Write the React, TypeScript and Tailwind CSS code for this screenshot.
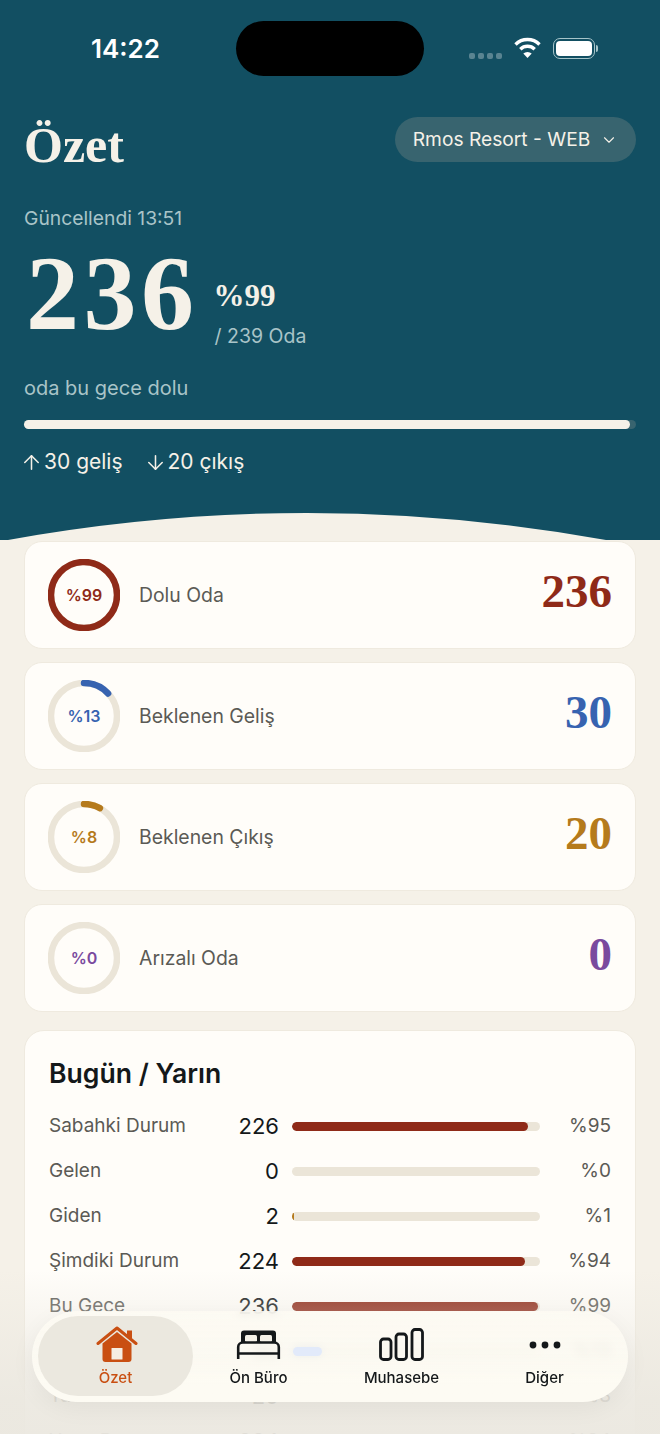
import React from 'react';
import { ChevronDown, ArrowUp, ArrowDown } from 'lucide-react';

const serif = { fontFamily: '"Liberation Serif", serif' };

const metrics = [
  { label: 'Dolu Oda', value: 236, pct: 99, color: '#8f2a18', text: 'text-[#8f2a18]' },
  { label: 'Beklenen Geliş', value: 30, pct: 13, color: '#3763b0', text: 'text-[#3763b0]' },
  { label: 'Beklenen Çıkış', value: 20, pct: 8, color: '#b57a1c', text: 'text-[#b57a1c]' },
  { label: 'Arızalı Oda', value: 0, pct: 0, color: '#7a4a9e', text: 'text-[#7a4a9e]' },
];

const rows = [
  { label: 'Sabahki Durum', value: 226, pct: 95, width: 95, color: '#8f2a18' },
  { label: 'Gelen', value: 0, pct: 0, width: 0, color: '#3763b0' },
  { label: 'Giden', value: 2, pct: 1, width: 1, color: '#b57a1c' },
  { label: 'Şimdiki Durum', value: 224, pct: 94, width: 94, color: '#8f2a18' },
  { label: 'Bu Gece', value: 236, pct: 99, width: 99, color: '#8f2a18' },
  { label: 'Yarın Gelen', value: 30, pct: 13, width: 12, color: '#3763b0' },
  { label: 'Yarın Giden', value: 20, pct: 8, width: 8, color: '#b57a1c' },
  { label: 'Yarın Durum', value: 224, pct: 94, width: 94, color: '#8f2a18' },
];

function Ring({ pct, color, text }: { pct: number; color: string; text: string }) {
  const r = 33;
  const c = 2 * Math.PI * r;
  return (
    <div className="relative flex h-[72px] w-[72px] shrink-0 items-center justify-center">
      <svg className="absolute inset-0" width="72" height="72" viewBox="0 0 72 72">
        <circle cx="36" cy="36" r={r} fill="none" stroke="#ebe5d8" strokeWidth="6.5" />
        {pct > 0 && (
          <circle
            cx="36"
            cy="36"
            r={r}
            fill="none"
            stroke={color}
            strokeWidth="6.5"
            strokeLinecap="round"
            strokeDasharray={`${(c * pct) / 100} ${c}`}
            transform="rotate(-90 36 36)"
          />
        )}
      </svg>
      <span className={`text-[16px] font-semibold ${text}`}>%{pct}</span>
    </div>
  );
}

function HomeIcon() {
  return (
    <svg className="ml-[2px]" width="42" height="37" viewBox="0 0 42 37">
      <path d="M6.5 17.5 21 6l14.5 11.5V33a3 3 0 0 1-3 3h-23a3 3 0 0 1-3-3z" fill="#c94f12" />
      <rect x="15.5" y="22" width="11" height="11.5" rx="0.5" fill="#f6eee2" />
      <path d="M2 17.5 21 2l19 15.5" fill="none" stroke="#c94f12" strokeWidth="3" strokeLinecap="round" strokeLinejoin="round" />
      <path d="M31 4.5h5v10l-5-4z" fill="#c94f12" />
    </svg>
  );
}

function BedIcon() {
  return (
    <svg width="45" height="29" viewBox="0 0 45 29">
      <path d="M5 13V3.5A3 3 0 0 1 8 .5h29a3 3 0 0 1 3 3V13z" fill="#14181a" />
      <rect x="9" y="5" width="12" height="7" rx="1.5" fill="#f4f1e8" />
      <rect x="24" y="5" width="12" height="7" rx="1.5" fill="#f4f1e8" />
      <path
        d="M2.2 29V17a4.5 4.5 0 0 1 4.5-4.5h31.6a4.5 4.5 0 0 1 4.5 4.5v12"
        fill="none"
        stroke="#14181a"
        strokeWidth="2.6"
      />
      <path d="M2 23.5h41" fill="none" stroke="#14181a" strokeWidth="2.6" />
    </svg>
  );
}

function BarsIcon() {
  return (
    <svg width="45" height="33" viewBox="0 0 45 33" fill="none" stroke="#14181a" strokeWidth="2.8">
      <rect x="1.5" y="11" width="10.5" height="20.5" rx="3" />
      <rect x="17" y="6" width="10.5" height="25.5" rx="3" />
      <rect x="33" y="1.5" width="10.5" height="30" rx="3" />
    </svg>
  );
}

function DotsIcon() {
  return (
    <svg width="32" height="8" viewBox="0 0 32 8" fill="#14181a">
      <circle cx="4" cy="4" r="3.4" />
      <circle cx="16" cy="4" r="3.4" />
      <circle cx="28" cy="4" r="3.4" />
    </svg>
  );
}

function StatusIcons() {
  return (
    <div className="flex items-center">
      <div className="mr-[11px] mt-[14px] flex gap-[3px]">
        <span className="h-[6px] w-[6px] rounded-[2px] bg-white/30" />
        <span className="h-[6px] w-[6px] rounded-[2px] bg-white/30" />
        <span className="h-[6px] w-[6px] rounded-[2px] bg-white/30" />
        <span className="h-[6px] w-[6px] rounded-[2px] bg-white/30" />
      </div>
      <svg className="-mt-[3px]" width="29" height="21" viewBox="0 0 28 21" fill="none" stroke="white" strokeWidth="3.4">
        <path d="M2 7.5a17 17 0 0 1 24 0" />
        <path d="M6.8 12.2a10.2 10.2 0 0 1 14.4 0" />
        <path d="M14 21l-4.2-4.4a6 6 0 0 1 8.4 0z" fill="white" stroke="none" />
      </svg>
      <div className="-mt-[1px] ml-[11px] flex items-center">
        <div className="flex h-[21px] w-[42px] items-center justify-center rounded-[7px] border-[1.5px] border-[#a6c4c9]">
          <div className="h-[15px] w-[36px] rounded-[4px] bg-white" />
        </div>
        <div className="ml-[1px] h-[7px] w-[2px] rounded-r-full bg-[#a6c4c9]" />
      </div>
    </div>
  );
}

function NavItem({ label, icon, active }: { label: string; icon: React.ReactNode; active?: boolean }) {
  return (
    <div className="flex w-[143px] flex-col items-center">
      <div className="flex h-[44px] items-center justify-center">{icon}</div>
      <span className={`mt-[1px] text-[15px] font-medium leading-[20px] ${active ? 'text-[#c94f12]' : 'text-[#14181a]'}`}>{label}</span>
    </div>
  );
}

export default function App() {
  return (
    <div className="relative h-[1434px] w-[660px] overflow-hidden bg-[#f5f1e8]" style={{ fontFamily: 'Inter, sans-serif' }}>
      {/* Header */}
      <header className="h-[540px] bg-[#124f62] px-[24px] pt-[21px]">
        <div className="flex h-[55px] items-center">
          <span className="ml-[67px] w-[145px] text-[26px] font-semibold text-white">14:22</span>
          <div className="h-[55px] w-[188px] rounded-[28px] bg-black" />
          <div className="ml-[45px]">
            <StatusIcons />
          </div>
        </div>

        <div className="mt-[41px] flex items-start justify-between">
          <h1 className="text-[50px] font-bold leading-[56px] text-[#f5f1e8]" style={serif}>Özet</h1>
          <div className="flex h-[45px] w-[241px] items-center justify-center gap-[10px] rounded-full bg-[#38646f] text-[19.2px] text-[#f5f1e8]">
            Rmos Resort - WEB
            <ChevronDown size={18} strokeWidth={1.5} />
          </div>
        </div>

        <p className="mt-[33px] text-[19.3px] leading-[24px] text-[#a9c4c8]">Güncellendi 13:51</p>

        <div className="mt-[14px] flex items-start">
          <span className="ml-[2px] text-[106px] font-bold leading-[100px] tracking-[4.5px] text-[#f5f1e8]" style={serif}>236</span>
          <div className="ml-[15px] mt-[34px]">
            <div className="text-[31px] font-bold leading-[36px] text-[#f5f1e8]" style={serif}>%99</div>
            <div className="ml-[1px] mt-[9px] text-[19.5px] leading-[26px] text-[#a9c4c8]">/ 239 Oda</div>
          </div>
        </div>

        <p className="mt-[26px] text-[20px] leading-[26px] text-[#a9c4c8]">oda bu gece dolu</p>

        <div className="mt-[19px] h-[9px] rounded-full bg-[#38646f]">
          <div className="h-full w-[99%] rounded-full bg-[#f5f1e8]" />
        </div>

        <div className="mt-[20px] flex gap-[21px] text-[21px] leading-[26px] text-[#f5f1e8]">
          <span className="-ml-[4px] flex items-center gap-[1px]"><ArrowUp size={23} strokeWidth={1.6} />30 geliş</span>
          <span className="flex items-center gap-[1px]"><ArrowDown size={23} strokeWidth={1.6} />20 çıkış</span>
        </div>
      </header>

      {/* Curve over the header's bottom edge */}
      <svg className="absolute left-0 top-[513px]" width="660" height="27" viewBox="0 0 660 27">
        <path d="M8 27Q307 -27 606 27Z" fill="#f5f1e8" />
      </svg>

      {/* Metric cards */}
      <div className="flex flex-col gap-[13px] px-[24px] pt-[1px]">
        {metrics.map((m) => (
          <div key={m.label} className="flex h-[108px] items-center rounded-[18px] border border-[#efeadf] bg-[#fffdf9] px-[23px]">
            <Ring pct={m.pct} color={m.color} text={m.text} />
            <span className="ml-[19px] mt-[2px] flex-1 text-[19.4px] text-[#5b5a55]">{m.label}</span>
            <span className={`mb-[8px] text-[47px] font-bold leading-none ${m.text}`} style={serif}>{m.value}</span>
          </div>
        ))}
      </div>

      {/* Bugün / Yarın */}
      <section className="mx-[24px] mt-[18px] rounded-[20px] border border-[#efeadf] bg-[#fffdf9] px-[24px] pt-[24px]">
        <h2 className="text-[26.6px] font-semibold leading-[36px] text-[#14181a]">Bugün / Yarın</h2>
        <div className="mt-[13px] flex flex-col">
          {rows.map((r) => (
            <div key={r.label} className="flex h-[45px] items-center">
              <span className="w-[160px] text-[19px] text-[#5b5a55]">{r.label}</span>
              <span className="w-[70px] text-right text-[22px] text-[#14181a]">{r.value}</span>
              <div className="ml-[13px] h-[9px] w-[248px] overflow-hidden rounded-full bg-[#ebe5d8]">
                <div className="h-full rounded-full" style={{ width: `${r.width}%`, backgroundColor: r.color }} />
              </div>
              <span className="flex-1 text-right text-[19px] text-[#5b5a55]">%{r.pct}</span>
            </div>
          ))}
        </div>
      </section>

      {/* Fade behind the tab bar */}
      <div className="absolute inset-x-0 bottom-0 h-[164px] bg-gradient-to-b from-[#ebe8e000] via-[#ebe8e0e6] via-80% to-[#ebe8e0f2]" />

      {/* Tab bar */}
      <nav className="absolute left-[32px] top-[1311px] flex h-[91px] w-[596px] items-center rounded-[46px] bg-gradient-to-b from-[#fdfbf3cc] via-[#fdfbf3d4] via-50% to-[#fdfbf3] to-80% px-[12px] pb-[3px] shadow-[0_6px_24px_rgba(0,0,0,0.05)] backdrop-blur-[4px]">
        <div className="absolute left-[6px] top-[5px] h-[80px] w-[155px] rounded-[40px] bg-[#ebe8df]" />
        {/* tint of the blue bar showing through the glass */}
        <div className="absolute left-[261px] top-[36px] h-[9px] w-[29px] rounded-full bg-[#e2eafa]" />
        <div className="relative flex">
          <NavItem label="Özet" icon={<HomeIcon />} active />
          <NavItem label="Ön Büro" icon={<BedIcon />} />
          <NavItem label="Muhasebe" icon={<BarsIcon />} />
          <NavItem label="Diğer" icon={<DotsIcon />} />
        </div>
      </nav>
    </div>
  );
}
